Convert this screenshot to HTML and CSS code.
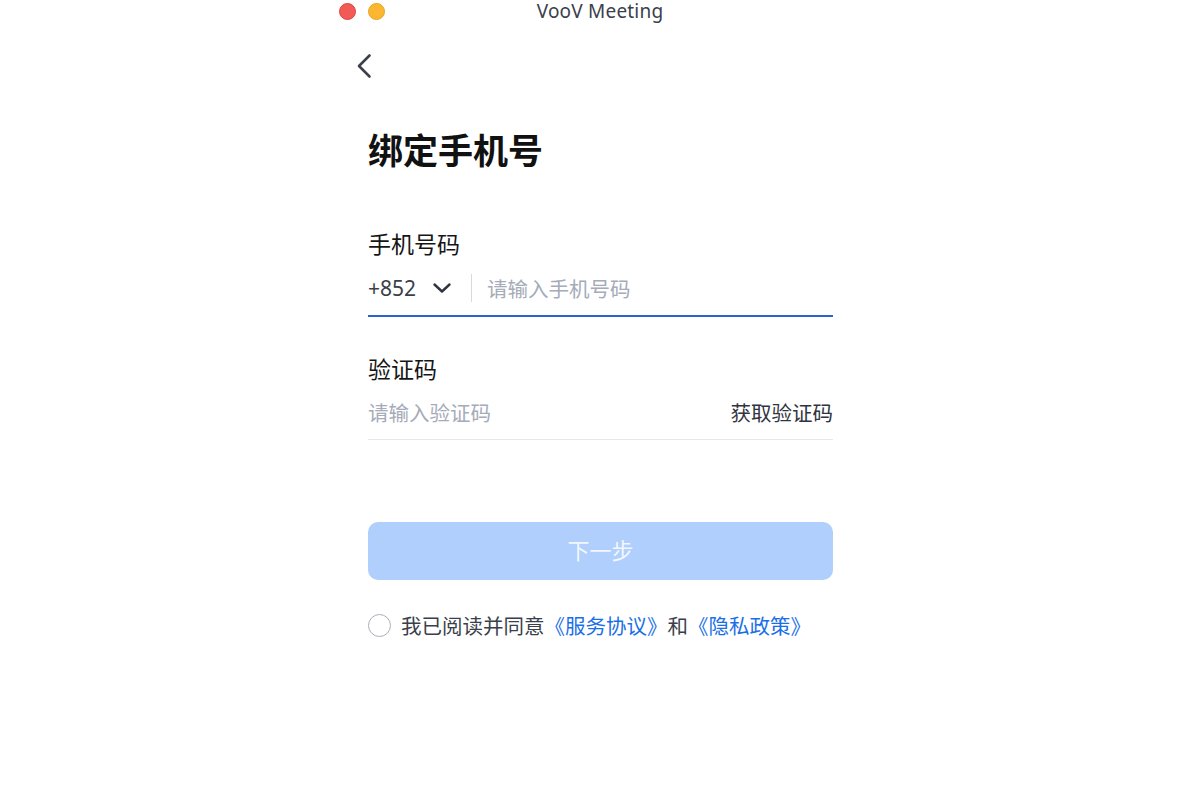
FILE: index.html
```html
<!DOCTYPE html>
<html lang="zh-CN">
<head>
<meta charset="utf-8">
<title>VooV Meeting</title>
<link rel="stylesheet" href="styles.css">
</head>
<body>
<div class="window">
  <div class="titlebar">
    <div class="lights">
      <span class="light red"></span>
      <span class="light yellow"></span>
    </div>
    <div class="title">VooV Meeting</div>
    <div></div>
  </div>
  <div class="content">
    <div class="back">
      <svg width="24" height="26" viewBox="0 0 24 26"><path d="M14.5 2.5 L4 13 L14.5 23.5" fill="none" stroke="#3a404d" stroke-width="2.6" stroke-linecap="round" stroke-linejoin="round"/></svg>
    </div>
    <h1 class="heading">绑定手机号</h1>
    <div class="label label-phone">手机号码</div>
    <div class="row row-phone">
      <span class="code">+852</span>
      <svg class="caret" width="20" height="14" viewBox="0 0 20 14"><path d="M2.5 3.5 L10 10.5 L17.5 3.5" fill="none" stroke="#2f3440" stroke-width="2.4" stroke-linecap="round" stroke-linejoin="round"/></svg>
      <span class="sep"></span>
      <span class="placeholder">请输入手机号码</span>
    </div>
    <div class="label label-code">验证码</div>
    <div class="row row-code">
      <span class="placeholder">请输入验证码</span>
      <span class="get-code">获取验证码</span>
    </div>
    <button class="next">下一步</button>
    <div class="agree">
      <span class="check"></span>
      <span class="agree-text">我已阅读并同意<a class="link">《服务协议》</a>和<a class="link">《隐私政策》</a></span>
    </div>
  </div>
</div>
</body>
</html>
```

FILE: styles.css
```css
* { box-sizing: border-box; }
html, body { margin: 0; padding: 0; background: #ffffff; }
body {
  font-family: "Liberation Sans", "Noto Sans CJK SC", sans-serif;
  width: 1200px;
  height: 800px;
  overflow: hidden;
}
.window {
  width: 540px;
  margin-left: 330px;
}
.titlebar {
  height: 22px;
  display: grid;
  grid-template-columns: 1fr auto 1fr;
  align-items: center;
}
.lights {
  display: flex;
  gap: 12px;
  padding-left: 9px;
  padding-top: 1px;
}
.light {
  width: 17px;
  height: 17px;
  border-radius: 50%;
  display: block;
}
.red { background: #f25a55; border: 1px solid #e0443f; }
.yellow { background: #fbb731; border: 1px solid #e9a51e; }
.title {
  font-family: "Noto Sans", "Liberation Sans", sans-serif;
  font-size: 19px;
  line-height: 22px;
  color: #3b404c;
  letter-spacing: 0.2px;
}
.content {
  padding-left: 38px;
  width: 503px;
}
.back {
  margin-top: 31px;
  margin-left: -13px;
  height: 26px;
}
.back svg { display: block; }
.heading {
  margin: 50px 0 0 0;
  font-size: 35px;
  line-height: 40px;
  font-weight: 700;
  color: #111111;
  font-family: "Noto Sans CJK SC", sans-serif;
}
.label {
  font-size: 23px;
  line-height: 30px;
  color: #151515;
  font-family: "Noto Sans CJK SC", sans-serif;
}
.label-phone { margin-top: 59px; }
.label-code { margin-top: 36px; }
.row {
  display: flex;
  align-items: center;
  font-size: 20.5px;
  padding-bottom: 8px;
}
.row-phone {
  margin-top: 11px;
  height: 48px;
  border-bottom: 2px solid #2a66c9;
}
.row-code {
  margin-top: 10px;
  height: 47px;
  border-bottom: 1px solid #e5e7ea;
  justify-content: space-between;
}
.code {
  color: #3a3f4b;
  font-size: 21px;
  font-family: "Noto Sans", "Liberation Sans", sans-serif;
}
.caret { margin-left: 16px; display: block; }
.sep {
  width: 1px;
  height: 28px;
  background: #d6d9de;
  margin-left: 19px;
  margin-right: 15px;
}
.placeholder {
  color: #a5abb9;
  font-family: "Noto Sans CJK SC", sans-serif;
}
.get-code {
  color: #2f3440;
  font-family: "Noto Sans CJK SC", sans-serif;
}
.next {
  display: block;
  margin-top: 82px;
  width: 465px;
  height: 58px;
  border: 0;
  border-radius: 10px;
  background: #b0cffc;
  color: #f3f7ff;
  font-size: 22px;
  line-height: 30px;
  font-family: "Noto Sans CJK SC", sans-serif;
  padding: 0 0 4px 0;
}
.agree {
  margin-top: 30px;
  display: flex;
  align-items: center;
  height: 30px;
}
.check {
  width: 23px;
  height: 23px;
  border: 1.5px solid #a9aeb8;
  border-radius: 50%;
  display: block;
  margin-right: 10px;
}
.agree-text {
  font-size: 20.5px;
  line-height: 30px;
  color: #3a3f4b;
  font-family: "Noto Sans CJK SC", sans-serif;
}
.link { color: #1a6fe6; text-decoration: none; }
```
